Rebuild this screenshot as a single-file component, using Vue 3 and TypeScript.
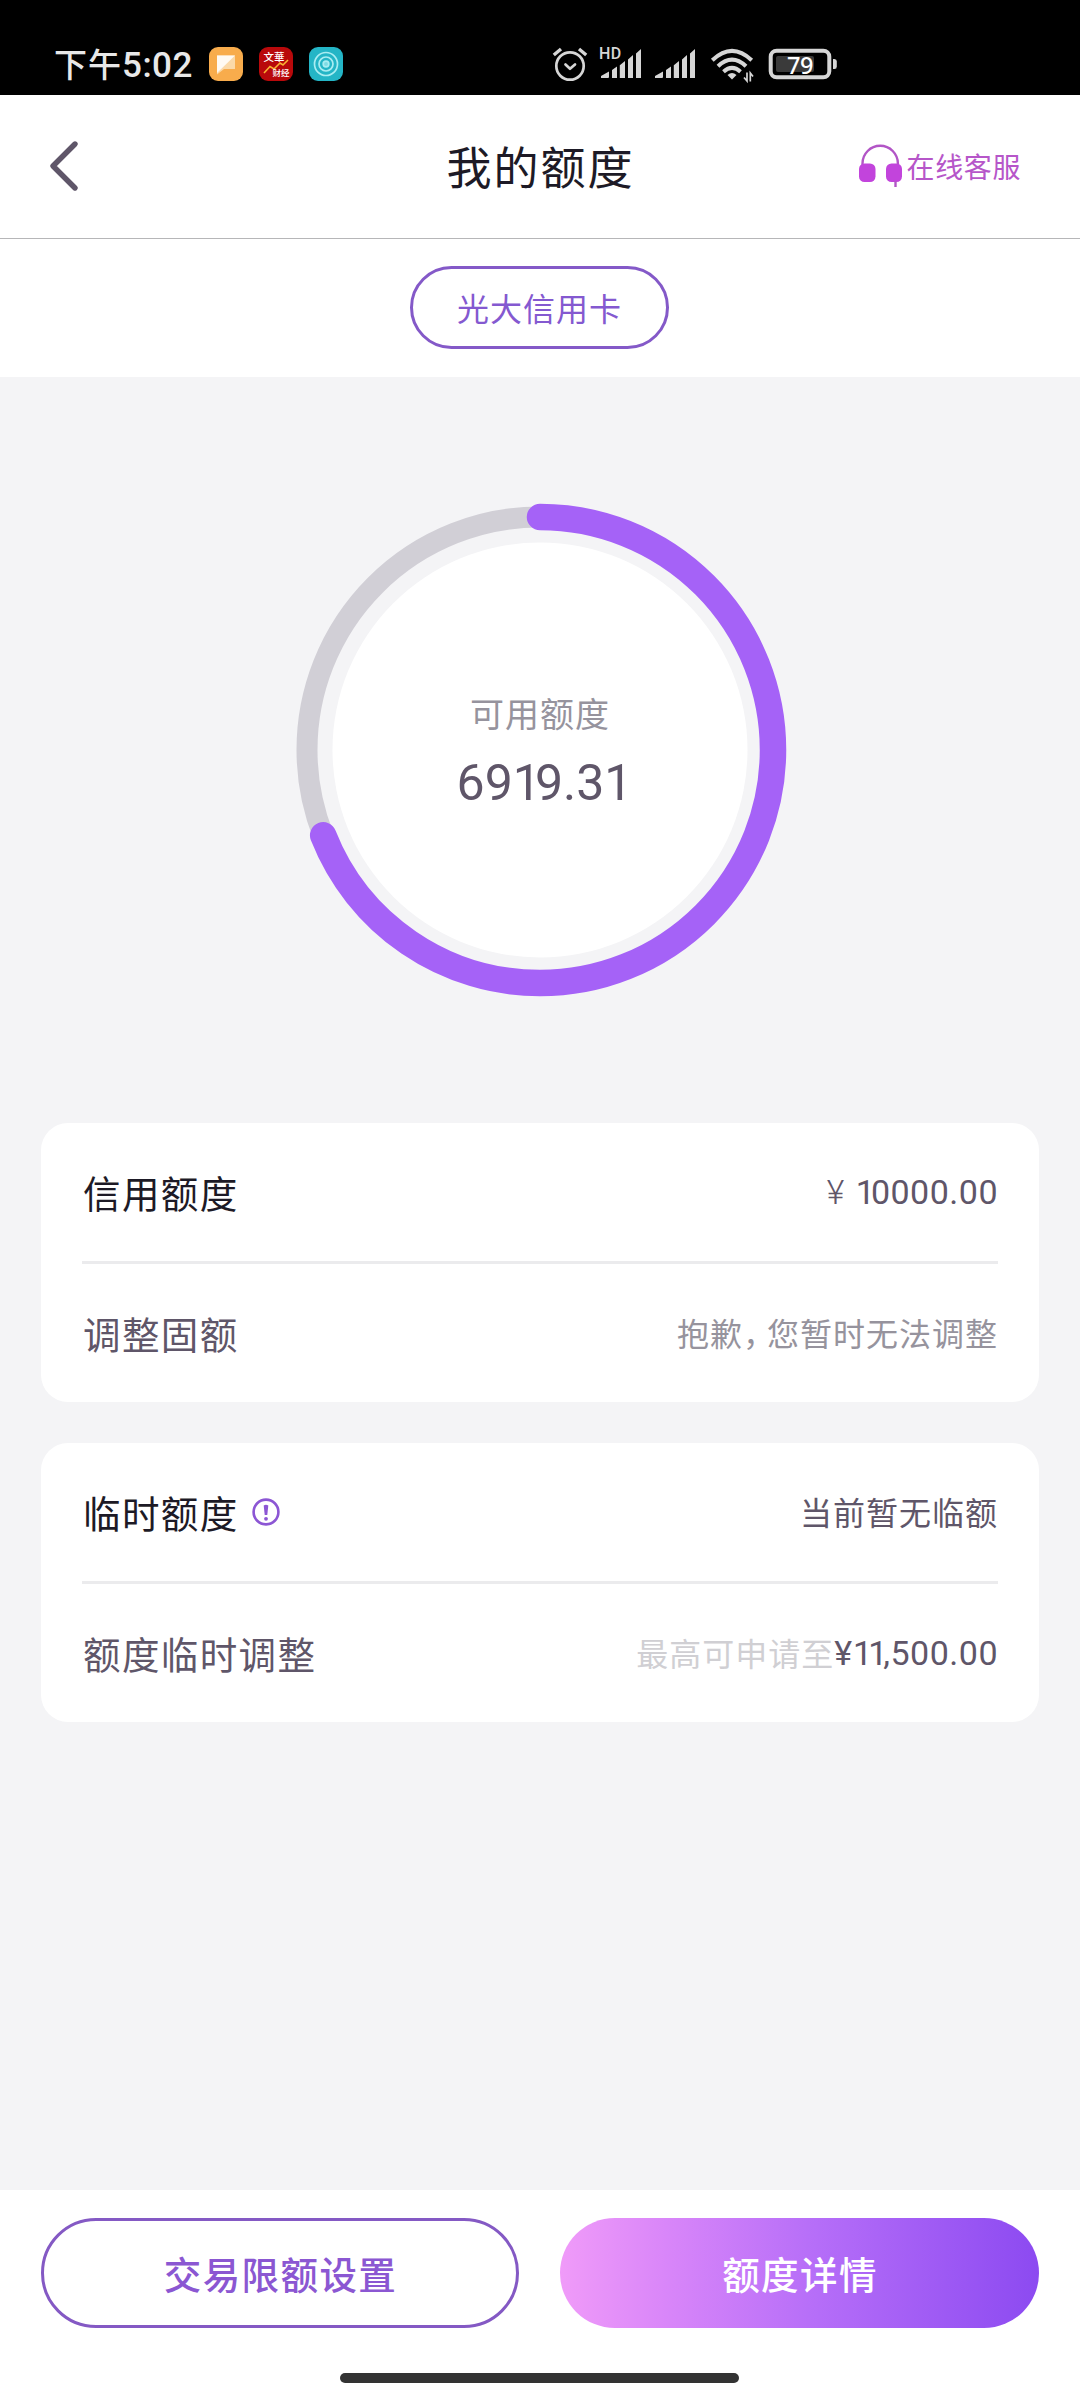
<script setup lang="ts">
interface Row {
  label: string
  muted?: boolean
  info?: boolean
  hint?: string
  note?: string[]
  value?: string
  amount?: string
  thinSign?: boolean
}

const cards: Row[][] = [
  [
    { label: '信用额度', amount: '10000.00', thinSign: true },
    { label: '调整固额', muted: true, note: ['抱歉', '，', '您暂时无法调整'] },
  ],
  [
    { label: '临时额度', info: true, value: '当前暂无临额' },
    { label: '额度临时调整', muted: true, hint: '最高可申请至', amount: '11,500.00' },
  ],
]

const available = '6919.31'
const total = 10000
const radius = 233
const circumference = 2 * Math.PI * radius
const percent = Math.floor((Number(available) / total) * 100)
const dash = `${(percent / 100) * circumference} ${circumference}`
</script>

<template>
  <div class="page">
    <div class="status">
      <span class="time">下午<i>5:02</i></span>
      <svg class="app" width="34" height="34" viewBox="0 0 34 34">
        <rect width="34" height="34" rx="9" fill="#f8ac4c" />
        <path d="M8 8.500H26V22H15L8 27.500Z" fill="#fbd9a8" />
        <path d="M8 8.500H26L8 26Z" fill="#fffaf3" />
      </svg>
      <svg class="app" width="34" height="34" viewBox="0 0 34 34">
        <rect width="34" height="34" rx="9" fill="#b9090b" />
        <text x="4.500" y="14" class="logo-top">文華</text>
        <path d="M5 26L11 19.500L15 22L21 16L24 18L29 13" fill="none" stroke="#f9b233" stroke-width="1.600" />
        <text x="13.500" y="28.500" class="logo-bottom">财经</text>
      </svg>
      <svg class="app" width="34" height="34" viewBox="0 0 34 34">
        <rect width="34" height="34" rx="9" fill="#24b5c6" />
        <g fill="none" stroke="#a9edf2" stroke-width="1.700">
          <circle cx="17" cy="17" r="11.500" />
          <circle cx="17" cy="17" r="7" />
          <circle cx="17" cy="17" r="2.800" fill="#7edbe4" />
        </g>
      </svg>

      <svg class="system" width="290" height="40" viewBox="0 0 290 40">
        <g fill="none" stroke="#d6d6d6" stroke-linecap="round" stroke-linejoin="round">
          <circle cx="20" cy="22" r="13.700" stroke-width="2.700" />
          <path d="M15.500 20.500L20 24.800L25 20.500" stroke-width="2.700" />
          <path d="M3.800 11L11 5M36.200 11L29 5" stroke-width="3.400" stroke-linecap="butt" />
        </g>
        <text x="49" y="15.300" class="hd">HD</text>
        <g fill="#d6d6d6">
          <path d="M51 34V32L59 27.500V33Q59 34 58 34ZM62 26L67 22.500V34H62ZM69.800 21.300L75 17V34H69.800ZM78 15.500L83 11V34H78ZM86 9.500L91 5V34H86Z" />
          <path d="M105 34V32L113 27.500V33Q113 34 112 34ZM116 26L121 22.500V34H116ZM123.800 21.300L129 17V34H123.800ZM132 15.500L137 11V34H132ZM140 9.500L145 5V34H140Z" />
        </g>
        <g fill="none" stroke="#d6d6d6" stroke-width="4">
          <path d="M162.300 16.200Q182 -2.500 201.700 16.200" />
          <path d="M168 22.300Q182 9 196 22.300" />
          <path d="M173.500 27.700Q182 20 190.500 27.700" />
        </g>
        <path d="M177.500 31Q182 26.800 186.500 31L182 35.500Z" fill="#d6d6d6" />
        <path d="M197 28.500V37L194 33.500M200.300 37.500V29L203 32.500" fill="none" stroke="#d6d6d6" stroke-width="1.700" />
        <rect x="220.700" y="6.700" width="58.600" height="26.600" rx="6" fill="none" stroke="#d6d6d6" stroke-width="4" />
        <rect x="226" y="12" width="38" height="16" rx="2" fill="#3a3a3a" />
        <path d="M283 15H284.500Q286.800 15 286.800 17.500V22.500Q286.800 25 284.500 25H283Z" fill="#d6d6d6" />
        <text x="237" y="29.500" class="percent">79</text>
      </svg>
    </div>

    <header class="header">
      <svg class="back" width="36" height="56" viewBox="0 0 36 56">
        <path d="M29 6L7 28L29 50" fill="none" stroke="#5f5669" stroke-width="5.400" stroke-linecap="round" stroke-linejoin="round" />
      </svg>
      <h1>我的额度</h1>
      <div class="service">
        <svg width="46" height="46" viewBox="0 0 46 46">
          <path d="M5.500 21V19.500A17.700 17.700 0 0 1 40.900 19.500V21" fill="none" stroke="#b255c6" stroke-width="2.400" />
          <rect x="2" y="19.500" width="16.500" height="18.500" rx="5.500" fill="#c244dc" />
          <rect x="29" y="19.500" width="16" height="18.500" rx="5.500" fill="#c244dc" />
          <path d="M38.500 37V43" stroke="#b255c6" stroke-width="2.400" />
        </svg>
        <span>在线客服</span>
      </div>
    </header>

    <div class="tabs"><div class="tab">光大信用卡</div></div>

    <main class="main">
      <div class="gauge">
        <svg class="ring" width="500" height="500" viewBox="-250 -250 500 500">
          <circle r="233" fill="none" stroke="#d1cfd6" stroke-width="21" />
          <circle r="207.500" fill="#fff" />
          <circle
            :r="radius"
            fill="none"
            stroke="#a562f7"
            stroke-width="26.500"
            stroke-linecap="round"
            :stroke-dasharray="dash"
            transform="rotate(-90)"
          />
        </svg>
        <div class="gauge-label">可用额度</div>
        <div class="gauge-value"><span v-for="(c, i) in available" :key="i" :class="{ one: c === '1' }">{{ c }}</span></div>
      </div>

      <section v-for="(rows, n) in cards" :key="n" class="card">
        <div v-for="row in rows" :key="row.label" class="row">
          <span class="label" :class="{ muted: row.muted }">{{ row.label }}</span>
          <svg v-if="row.info" class="info" width="28" height="28" viewBox="0 0 28 28">
            <circle cx="14" cy="14" r="12.400" fill="none" stroke="#8c56d4" stroke-width="2.600" />
            <path d="M11.700 7.500Q14 5.800 16.300 7.500L15.300 17H12.700Z" fill="#8c56d4" />
            <circle cx="14" cy="20.800" r="1.900" fill="#8c56d4" />
          </svg>
          <span class="right">
            <span v-if="row.note" class="text note"><span v-for="part in row.note" :key="part" :class="{ comma: part === '，' }">{{ part }}</span></span>
            <span v-if="row.value" class="text">{{ row.value }}</span>
            <span v-if="row.hint" class="text hint">{{ row.hint }}</span>
            <span v-if="row.amount" class="amount"><span class="sign" :class="{ thin: row.thinSign }">¥</span><span v-for="(c, i) in row.amount" :key="i" :class="{ one: c === '1' }">{{ c }}</span></span>
          </span>
        </div>
      </section>
    </main>

    <footer class="footer">
      <div class="actions">
        <button class="btn outline">交易限额设置</button>
        <button class="btn solid">额度详情</button>
      </div>
      <div class="home"></div>
    </footer>
  </div>
</template>

<style>
body {
  margin: 0;
}
</style>

<style scoped>
.page {
  width: 1080px;
  height: 2400px;
  display: flex;
  flex-direction: column;
  overflow: hidden;
  background: #f4f4f6;
  color: #1d1a26;
  font-family: "Noto Sans CJK SC", sans-serif;
}

.status {
  height: 95px;
  flex: none;
  box-sizing: border-box;
  padding: 32px 0 0 54px;
  display: flex;
  align-items: center;
  background: #000;
}
.time {
  width: 155px;
  padding-top: 1px;
  color: #e8e8e8;
  font-size: 33px;
  font-weight: 500;
  letter-spacing: 1px;
  line-height: 40px;
  white-space: nowrap;
}
.time i {
  font: 500 35px "Roboto", sans-serif;
  letter-spacing: 0.5px;
}
.app {
  margin-right: 16px;
}
.system {
  margin-left: 191px;
}
.logo-top {
  font-size: 10.5px;
  font-weight: 500;
  fill: #fff;
}
.logo-bottom {
  font-size: 8.5px;
  font-weight: 500;
  fill: #fff;
}
.hd {
  font: 500 16px "Roboto", sans-serif;
  letter-spacing: 0.5px;
  fill: #d6d6d6;
}
.percent {
  font: 500 23.5px "Noto Sans", sans-serif;
  letter-spacing: -0.5px;
  fill: #fff;
}

.header {
  height: 144px;
  flex: none;
  box-sizing: border-box;
  padding: 0 59px 0 46px;
  border-bottom: 1px solid #b6b6b8;
  background: #fff;
  display: grid;
  grid-template-columns: 1fr auto 1fr;
  align-items: center;
}
.back {
  margin-bottom: 1px;
}
.header h1 {
  margin: 0 -15px 0 -1px;
  padding-bottom: 1px;
  font-size: 45px;
  font-weight: 400;
  line-height: 60px;
  letter-spacing: 2px;
}
.service {
  display: flex;
  align-items: center;
  justify-content: flex-end;
  color: #b656c9;
  font-size: 28px;
  line-height: 40px;
  letter-spacing: 0.6px;
}
.service svg {
  margin-right: 4px;
}
.service span {
  padding-bottom: 1px;
}

.tabs {
  height: 138px;
  flex: none;
  box-sizing: border-box;
  padding: 0 1px 1px 0;
  background: #fff;
  display: flex;
  align-items: center;
  justify-content: center;
}
.tab {
  width: 259px;
  height: 83px;
  box-sizing: border-box;
  border: 3px solid #8459c8;
  border-radius: 42px;
  color: #8459d0;
  font-size: 32px;
  line-height: 76px;
  letter-spacing: 1px;
  text-align: center;
}

.main {
  flex: 1;
  padding: 0 41px;
}
.gauge {
  height: 746px;
  display: flex;
  flex-direction: column;
  align-items: center;
  box-sizing: border-box;
  padding-top: 311px;
}
.ring {
  position: absolute;
  top: 500px;
  left: 290px;
}
.gauge-label,
.gauge-value {
  position: relative;
}
.gauge-label {
  color: #96939d;
  font-size: 34px;
  line-height: 50px;
  letter-spacing: 1px;
}
.gauge-value {
  margin-top: 15px;
  color: #5f5669;
  font: 400 50px/60px "Roboto", sans-serif;
}
.gauge-value .one {
  letter-spacing: -6px;
}
.gauge-value .one:last-child {
  letter-spacing: -9px;
}

.card {
  height: 279px;
  margin-bottom: 41px;
  padding: 0 41px;
  border-radius: 27px;
  background: #fff;
}
.row {
  height: 138px;
  display: flex;
  align-items: center;
}
.row + .row {
  border-top: 3px solid #ebebed;
}
.label {
  padding: 0 0 1px 1px;
  font-size: 37.5px;
  letter-spacing: 1.4px;
  line-height: 54px;
}
.label.muted {
  color: #5f5669;
}
.info {
  margin-left: 13px;
}
.right {
  margin-left: auto;
  display: flex;
  align-items: center;
  color: #5f5669;
  font-size: 32px;
  line-height: 46px;
  letter-spacing: 1px;
}
.text {
  padding-bottom: 2px;
}
.note {
  color: #96939d;
}
.comma {
  letter-spacing: -8px;
}
.hint {
  color: #d0cfd3;
}
.amount {
  font: 400 34px/46px "Roboto", sans-serif;
  letter-spacing: 0.5px;
}
.amount .one {
  letter-spacing: -4px;
}
.sign:not(.thin) {
  letter-spacing: 1px;
}
.sign.thin {
  margin-right: 11px;
  font-weight: 300;
}

.footer {
  height: 210px;
  flex: none;
  background: #fff;
}
.actions {
  display: flex;
  gap: 41px;
  padding: 28px 41px 0;
}
.btn {
  width: 478px;
  height: 110px;
  flex: none;
  box-sizing: border-box;
  padding: 0 0 1px 1px;
  border: none;
  border-radius: 55px;
  font: 500 37.5px/54px "Noto Sans CJK SC", sans-serif;
  letter-spacing: 1.4px;
}
.outline {
  border: 3px solid #8459c4;
  background: #fff;
  color: #8b57d2;
}
.solid {
  width: 479px;
  background: linear-gradient(90deg, #f09bf9 0%, #d986f9 22%, #b66ef8 53%, #8c4af1 100%);
  color: #fff;
}
.home {
  width: 399px;
  height: 10px;
  margin: 45px 0 0 340px;
  border-radius: 5px;
  background: #333;
}
</style>
